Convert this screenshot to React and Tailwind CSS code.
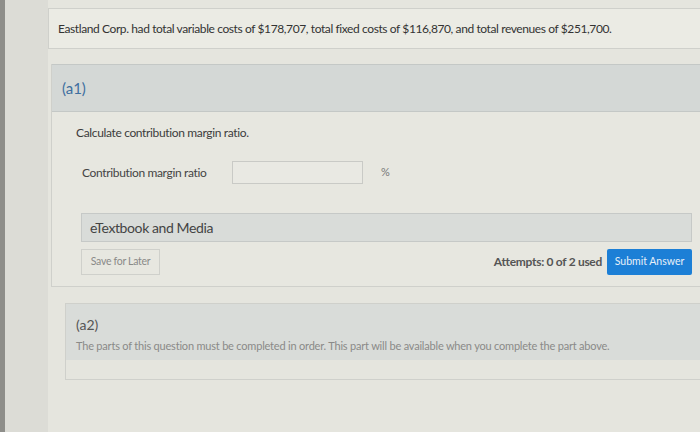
export default function App() {
  return (
    <div
      className="flex h-[432px] w-[700px] overflow-hidden bg-[#e5e5de] text-[#3a3a3a]"
      style={{ fontFamily: 'Lato, "Open Sans", sans-serif' }}
    >
      <div className="w-[5px] shrink-0 bg-[#8e8e8a]" />
      <div className="w-[43px] shrink-0 bg-[#dcdcd6]" />

      <div className="flex-1 pt-[8px]">
        {/* question statement */}
        <div className="flex h-[41px] items-center border border-r-0 border-[#cfd0cb] bg-[#ebebe4] pl-[9px] text-[12px] tracking-[-0.4px] text-[#333]">
          Eastland Corp. had total variable costs of $178,707, total fixed costs of $116,870, and total revenues of $251,700.
        </div>

        {/* part a1 */}
        <div className="ml-[3px] mt-[15px] border-l border-[#cfd0cb]">
          <div className="flex h-[48px] items-center border-y border-[#c4c8c6] bg-[#d4d8d6] pl-[10px] text-[15px] text-[#3e6f9f]">
            (a1)
          </div>
          <div className="border-b border-[#cfd0cb] bg-[#e7e7e0] pb-[11px] pl-[24px] pr-[8px] pt-[12px]">
            <p className="text-[12px] tracking-[-0.35px] text-[#3c3c3c]">Calculate contribution margin ratio.</p>

            <div className="mt-[19px] flex items-center">
              <span className="w-[156px] pl-[6px] text-[12px] tracking-[-0.35px] text-[#444]">Contribution margin ratio</span>
              <div className="h-[23px] w-[131px] border border-[#c9cac6] bg-[#e9e9e3]" />
              <span className="ml-[18px] text-[11px] text-[#777]">%</span>
            </div>

            <div className="mt-[29px] ml-[5px] flex h-[29px] items-center border border-[#c6c9c7] bg-[#d9dcd9] pl-[8px] text-[14px] tracking-[-0.4px] text-[#444]">
              eTextbook and Media
            </div>

            <div className="mt-[7px] ml-[5px] flex items-center">
              <div className="flex h-[26px] w-[79px] items-center justify-center border border-[#cfd0cb] bg-[#e7e7e0] text-[10.5px] tracking-[-0.3px] text-[#8a8a88]">
                Save for Later
              </div>
              <div className="flex-1" />
              <span className="mr-[5px] text-[12px] font-bold tracking-[-0.3px] text-[#555]">Attempts: 0 of 2 used</span>
              <div className="flex h-[26px] w-[85px] items-center justify-center rounded-[2px] bg-[#1c7fd6] text-[10.5px] text-[#e8f0f8]">
                Submit Answer
              </div>
            </div>
          </div>
        </div>

        {/* part a2 */}
        <div className="ml-[17px] mt-[16px] border border-r-0 border-[#cfd0cb]">
          <div className="h-[56px] bg-[#d9dcd9] pl-[10px] pt-[10px]">
            <div className="text-[14px] text-[#555]">(a2)</div>
            <p className="mt-[3px] text-[11px] tracking-[-0.2px] text-[#8a8a88]">
              The parts of this question must be completed in order. This part will be available when you complete the part above.
            </p>
          </div>
          <div className="h-[19px] bg-[#e5e5de]" />
        </div>
      </div>
    </div>
  );
}
